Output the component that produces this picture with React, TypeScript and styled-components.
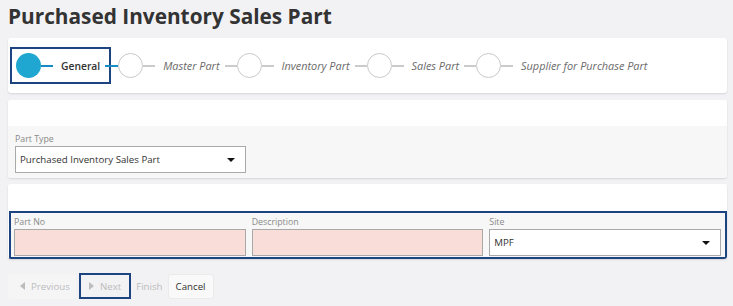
import React from "react";
import styled, {createGlobalStyle, css} from "styled-components";

const GlobalStyle = createGlobalStyle`
    body {
        margin: 0;
        background: #f2f1f3;
        font-family: "Open Sans", "Liberation Sans", sans-serif;
        color: #333;
    }
`;

const StyledPage = styled.div`
    padding: 0 6px 0 8px;
`;

const StyledTitle = styled.h1`
    margin: 0;
    padding-top: 3px;
    height: 35px;
    font-size: 20.8px;
    line-height: 26px;
    font-weight: 700;
    color: #333;
`;

const StyledCard = styled.div<{$gap?: number}>`
    background: #fff;
    border-radius: 3px;
    box-shadow: 0 1px 2px rgba(0, 0, 0, 0.12);
    margin-top: ${p => p.$gap ?? 0}px;
    overflow: hidden;
`;

const StyledSteps = styled.div`
    display: flex;
    align-items: center;
    height: 55px;
    padding-left: 2px;
`;

const StyledFocusBox = styled.div`
    display: flex;
    align-items: center;
    height: 33px;
    padding: 0 4px 0 4px;
    border: 2px solid #1d4481;
`;

const StyledCircle = styled.div<{$active?: boolean}>`
    width: 25px;
    height: 25px;
    box-sizing: border-box;
    border-radius: 50%;
    flex-shrink: 0;
    ${p => p.$active
        ? css`background: #1fa6d1;`
        : css`background: #fff; border: 1px solid #c9c9c9;`}
`;

const StyledLine = styled.div<{$active?: boolean; $over?: boolean}>`
    width: 12px;
    height: 2px;
    flex-shrink: 0;
    background: ${p => p.$active ? "#168bc4" : "#cbcbcb"};
    ${p => p.$over && css`
        position: relative;
        width: 13px;
        margin-left: -6px;
    `}
`;

const StyledStepLabel = styled.span<{$active?: boolean}>`
    margin: 0 5px 0 8px;
    white-space: nowrap;
    ${p => p.$active
        ? css`font-size: 10.3px; font-weight: 600; color: #333;`
        : css`font-size: 10.9px; font-style: italic; color: #6a6a6a;`}
`;

const StyledCardHead = styled.div<{$h: number}>`
    height: ${p => p.$h}px;
    background: #fff;
`;

const StyledSection = styled.div`
    background: #f7f7f7;
    padding: 6px 7px 5px;
`;

const StyledGroup = styled.div`
    background: #f7f7f7;
    border: 2px solid #1d4481;
    margin-left: 1px;
    padding: 2px 4px 1px 3px;
    display: grid;
    grid-template-columns: 1fr 1fr 1fr;
    column-gap: 6px;
`;

const StyledField = styled.div<{$w?: number}>`
    display: flex;
    flex-direction: column;
    width: ${p => p.$w ? `${p.$w}px` : "auto"};
`;

const StyledLabel = styled.label`
    font-size: 8.8px;
    line-height: 14px;
    color: #8a8a8a;
`;

const StyledInput = styled.div<{$required?: boolean}>`
    height: 27px;
    box-sizing: border-box;
    border: 1px solid #a9a9a9;
    background: ${p => p.$required ? "#f9ddd9" : "#fff"};
    display: flex;
    align-items: center;
    justify-content: space-between;
    padding: 0 10px 0 4px;
    font-size: 9.7px;
    color: #333;
`;

const StyledCaret = styled.span`
    width: 0;
    height: 0;
    border-left: 4px solid transparent;
    border-right: 4px solid transparent;
    border-top: 4px solid #111;
`;

const StyledButtons = styled.div`
    display: flex;
    align-items: center;
    margin-top: 14px;
`;

const StyledButton = styled.button<{$variant?: "disabled" | "focus" | "plain" | "normal"}>`
    font-family: inherit;
    font-size: 9.7px;
    height: 25px;
    box-sizing: border-box;
    display: flex;
    align-items: center;
    gap: 6px;
    border-radius: 3px;
    border: 0;
    padding: 0;
    background: transparent;
    color: #bcbcbc;
    ${p => p.$variant === "disabled" && css`
        background: #f5f5f6;
        padding: 0 6px 0 12px;
    `}
    ${p => p.$variant === "focus" && css`
        border: 2px solid #1d4481;
        border-radius: 0;
        height: 26px;
        padding: 0 8px;
        margin-left: 3px;
    `}
    ${p => p.$variant === "plain" && css`
        padding: 0 4px;
        margin-left: 1px;
    `}
    ${p => p.$variant === "normal" && css`
        background: #f9f9f9;
        border: 1px solid #ebebeb;
        color: #333;
        padding: 0 7px;
        margin-left: 1px;
    `}
`;

const StyledTri = styled.span<{$dir: "left" | "right"}>`
    width: 0;
    height: 0;
    border-top: 4px solid transparent;
    border-bottom: 4px solid transparent;
    ${p => p.$dir === "left"
        ? css`border-right: 5px solid #bcbcbc;`
        : css`border-left: 5px solid #bcbcbc;`}
`;

const steps = ["Master Part", "Inventory Part", "Sales Part", "Supplier for Purchase Part"];

const App = () => {
    return (
        <StyledPage>
            <GlobalStyle />
            <StyledTitle>Purchased Inventory Sales Part</StyledTitle>
            <StyledCard>
                <StyledSteps>
                    <StyledFocusBox>
                        <StyledCircle $active />
                        <StyledLine $active />
                        <StyledStepLabel $active>General</StyledStepLabel>
                    </StyledFocusBox>
                    <StyledLine $active $over />
                    {steps.map((step, i) =>
                        <React.Fragment key={step}>
                            {i > 0 && <StyledLine />}
                            <StyledCircle />
                            <StyledLine />
                            <StyledStepLabel>{step}</StyledStepLabel>
                        </React.Fragment>
                    )}
                </StyledSteps>
            </StyledCard>
            <StyledCard $gap={7}>
                <StyledCardHead $h={26} />
                <StyledSection>
                    <StyledField $w={231}>
                        <StyledLabel>Part Type</StyledLabel>
                        <StyledInput>
                            Purchased Inventory Sales Part
                            <StyledCaret />
                        </StyledInput>
                    </StyledField>
                </StyledSection>
            </StyledCard>
            <StyledCard $gap={6}>
                <StyledCardHead $h={27} />
                <StyledGroup>
                    <StyledField>
                        <StyledLabel>Part No</StyledLabel>
                        <StyledInput $required />
                    </StyledField>
                    <StyledField>
                        <StyledLabel>Description</StyledLabel>
                        <StyledInput $required />
                    </StyledField>
                    <StyledField>
                        <StyledLabel>Site</StyledLabel>
                        <StyledInput>
                            MPF
                            <StyledCaret />
                        </StyledInput>
                    </StyledField>
                </StyledGroup>
            </StyledCard>
            <StyledButtons>
                <StyledButton $variant="disabled"><StyledTri $dir="left" />Previous</StyledButton>
                <StyledButton $variant="focus"><StyledTri $dir="right" />Next</StyledButton>
                <StyledButton $variant="plain">Finish</StyledButton>
                <StyledButton $variant="normal">Cancel</StyledButton>
            </StyledButtons>
        </StyledPage>
    );
};

export default App;
